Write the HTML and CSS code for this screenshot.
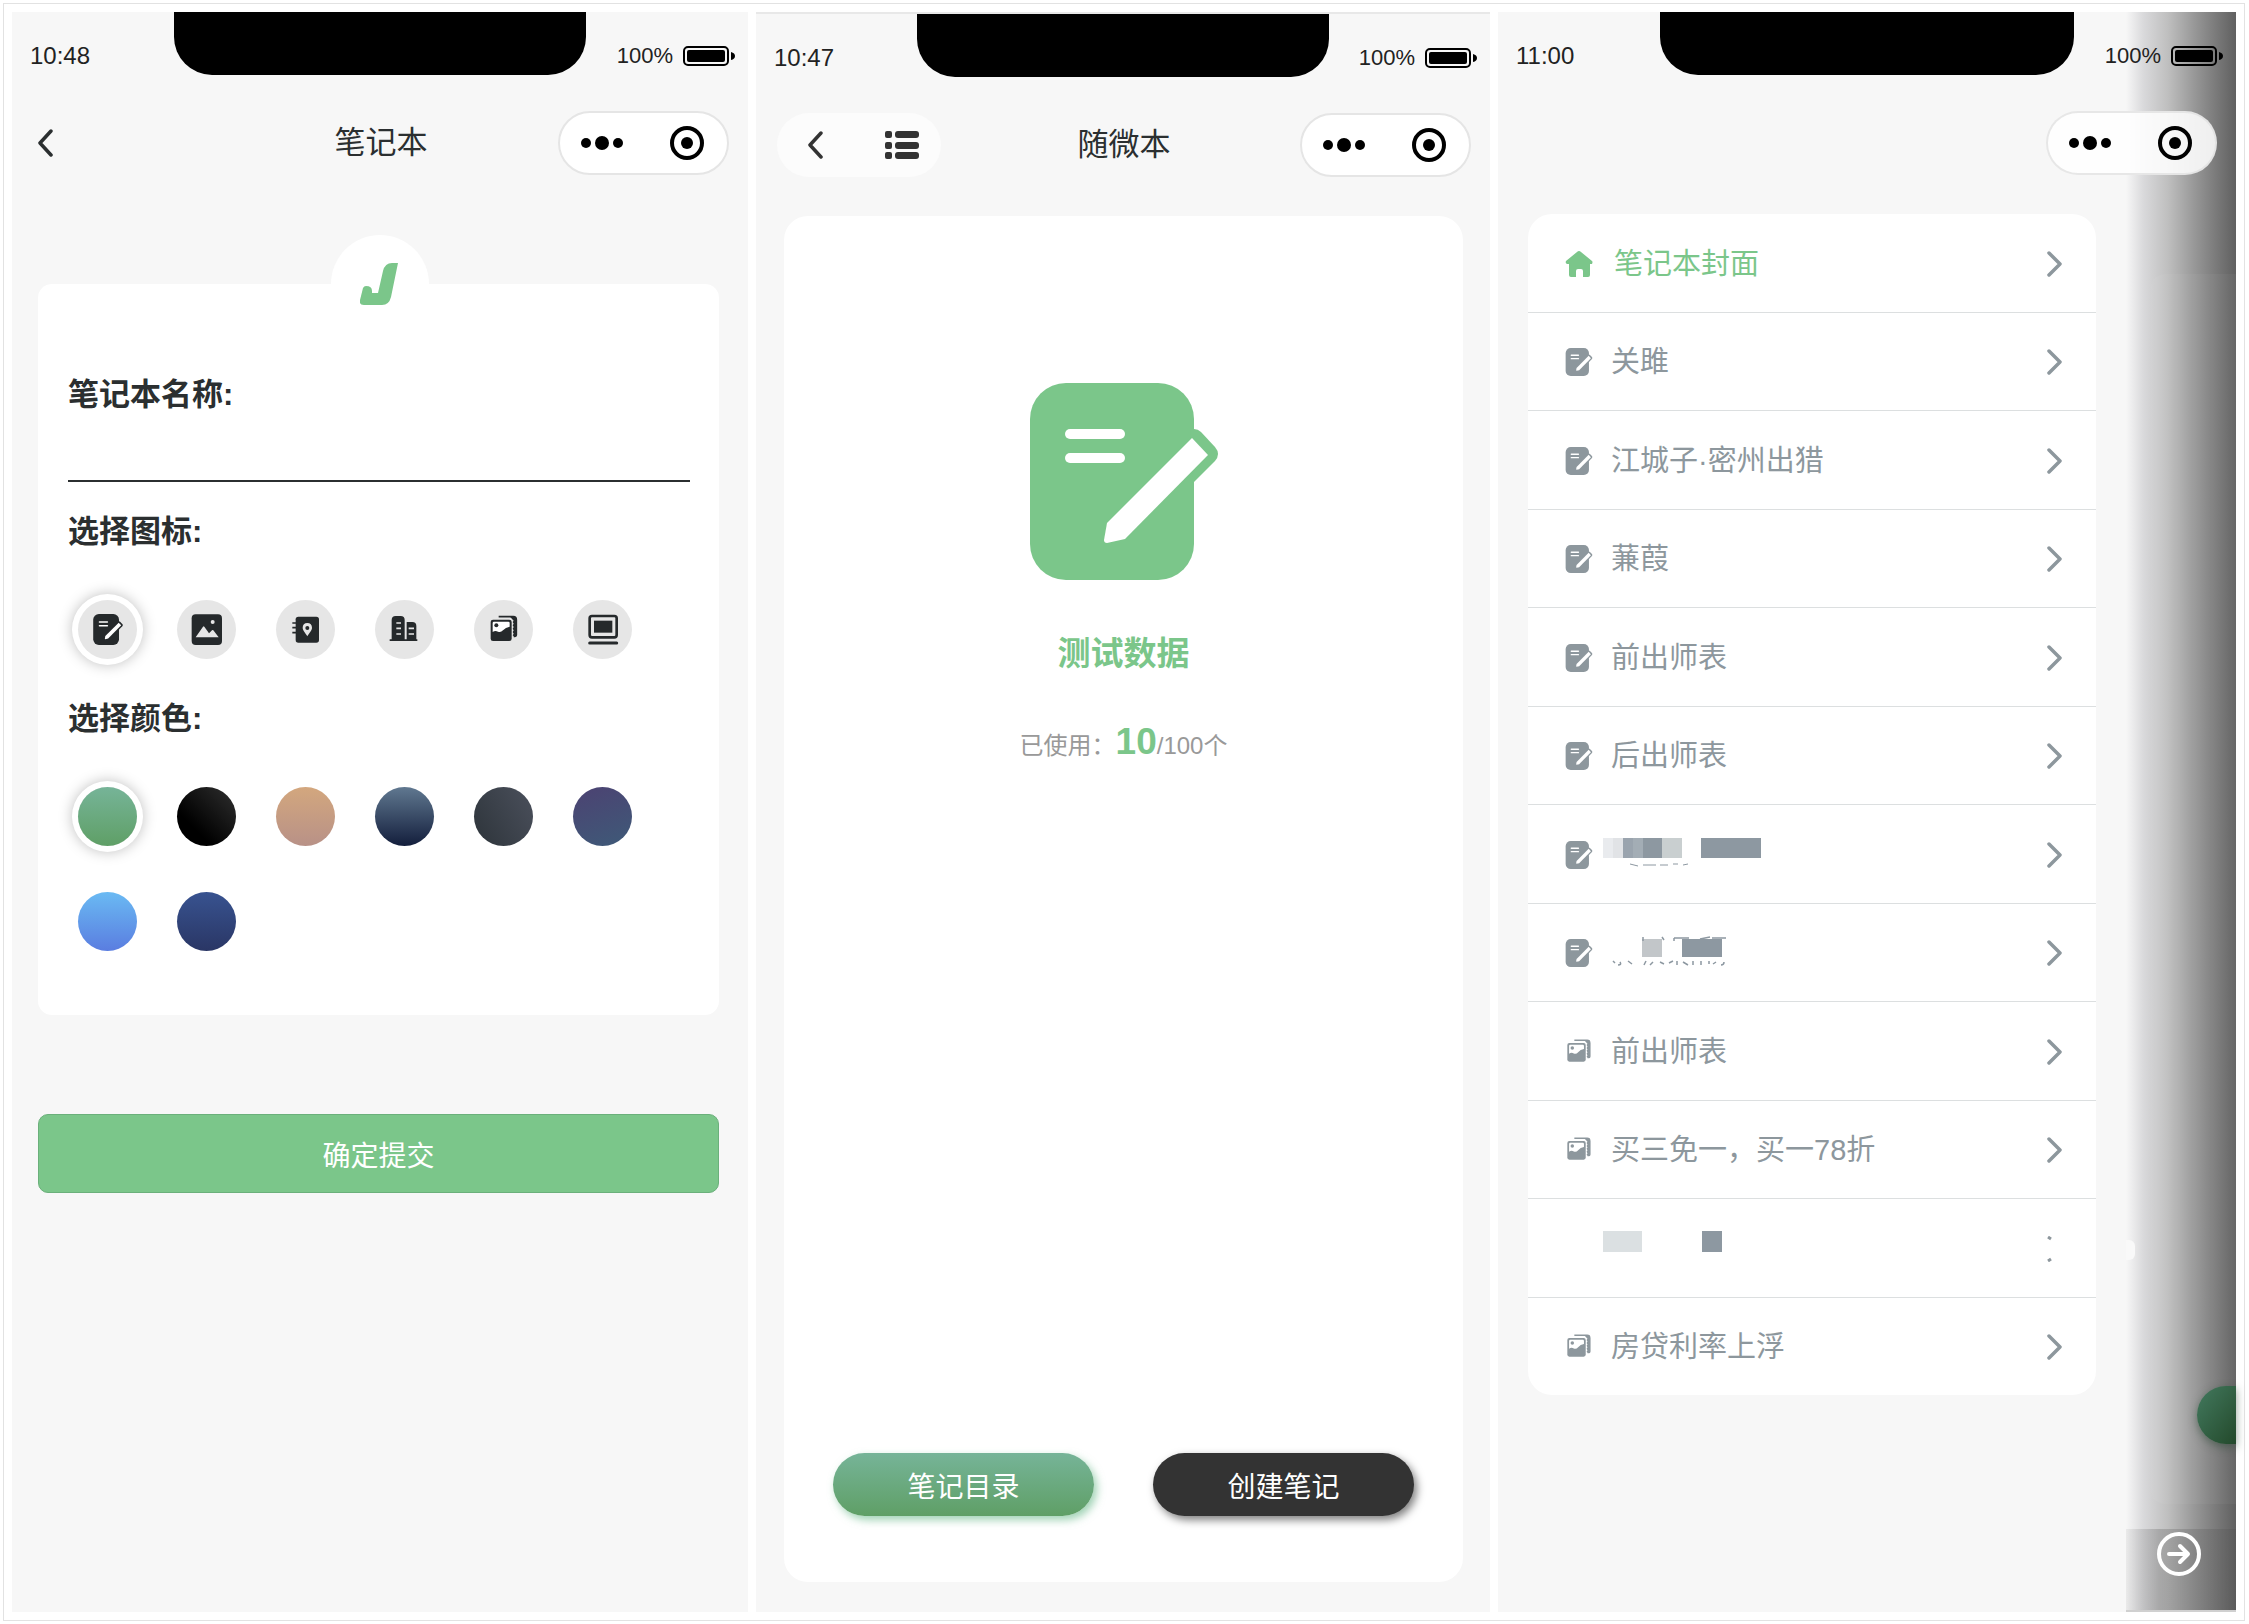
FILE: index.html
```html
<!DOCTYPE html>
<html lang="zh-CN">
<head>
    <meta charset="UTF-8">
    <meta name="viewport" content="width=device-width, initial-scale=1.0">
    <title>随微本</title>
    <link rel="stylesheet" href="styles.css">
</head>
<body>
    <!-- 公用图标 -->
    <svg class="sprite" aria-hidden="true">
        <symbol id="note" viewBox="0 0 188 197">
            <rect width="164" height="197" rx="36" fill="currentColor"/>
            <path d="M160 46h4q4 0 7 3l14 15q6 7 0 14l-22 22z" fill="currentColor"/>
            <rect class="hole" x="35" y="46" width="60" height="10" rx="5"/>
            <rect class="hole" x="35" y="70" width="60" height="10" rx="5"/>
            <path class="hole" d="M162 55l16 17-83 84-18 4q-3 0-3-3l3-17z"/>
        </symbol>
        <symbol id="gallery" viewBox="0 0 96 96">
            <path d="M32 8h44q9 0 9 9v46q0 4-4 4h-4" fill="none" stroke="currentColor" stroke-width="5"/>
            <path d="M66 8h12q8 0 8 8v48q0 3-6 3-4 0-6-3l3-5-3-5 3-5-3-5 3-5-3-5 3-5-3-5 3-4z" fill="currentColor"/>
            <rect x="8" y="17" width="63" height="64" rx="7" fill="currentColor"/>
            <path class="hole" d="M14 27q0-4 4-4h43q4 0 4 4v11q-12 2-20 11-7 8-15 4-8-5-16 1z"/>
            <circle cx="25" cy="34" r="6" fill="currentColor"/>
        </symbol>
        <symbol id="arrow-right" viewBox="0 0 16 26">
            <path d="M2 2l11 11L2 24" fill="none" stroke="currentColor" stroke-width="3.5" stroke-linecap="round" stroke-linejoin="round"/>
        </symbol>
        <symbol id="arrow-left" viewBox="0 0 16 28">
            <path d="M14 2L3 14l11 12" fill="none" stroke="currentColor" stroke-width="3.5" stroke-linecap="round" stroke-linejoin="round"/>
        </symbol>
        <symbol id="battery" viewBox="0 0 52 20">
            <rect x="1" y="1" width="44" height="18" rx="4" fill="none" stroke="#000" stroke-width="2"/>
            <rect x="4" y="4" width="38" height="12" rx="2" fill="#000"/>
            <path d="M48 6q4 1 4 4t-4 4z" fill="#000"/>
        </symbol>
        <symbol id="dots" viewBox="0 0 42 34">
            <circle cx="5" cy="17" r="5"/>
            <circle cx="21" cy="17" r="7"/>
            <circle cx="37" cy="17" r="5"/>
        </symbol>
        <symbol id="target" viewBox="0 0 34 34">
            <circle cx="17" cy="17" r="15" fill="none" stroke="#000" stroke-width="4"/>
            <circle cx="17" cy="17" r="6"/>
        </symbol>
    </svg>

    <main class="board">
        <!-- 新建笔记本 -->
        <section class="phone">
            <div class="status">
                <span class="time">10:48</span>
                <span class="notch"></span>
                <span class="power">100% <svg class="battery"><use href="#battery"/></svg></span>
            </div>
            <header class="nav">
                <button class="back" aria-label="返回"><svg><use href="#arrow-left"/></svg></button>
                <h1>笔记本</h1>
                <div class="capsule">
                    <button aria-label="更多"><svg class="dots"><use href="#dots"/></svg></button>
                    <button aria-label="关闭"><svg class="target"><use href="#target"/></svg></button>
                </div>
            </header>
            <form class="form">
                <div class="card form-card">
                    <div class="logo">
                        <svg viewBox="0 0 39 43">
                            <path d="M32 0h6l-7 34q-2 8-9 8H4q-5 0-4-5l3-12q1-2 3-2 6 0 6 5v2h6l5-22q2-8 9-8z" fill="currentColor"/>
                        </svg>
                    </div>
                    <label class="label" for="name">笔记本名称:</label>
                    <input class="name" id="name" type="text">

                    <h2 class="label">选择图标:</h2>
                    <div class="choices">
                        <label class="choice">
                            <input type="radio" name="icon" aria-label="笔记" checked>
                            <svg class="small"><use href="#note"/></svg>
                        </label>
                        <label class="choice">
                            <input type="radio" name="icon" aria-label="图片">
                            <svg viewBox="0 0 96 96">
                                <rect x="2" y="1" width="91" height="92" rx="12" fill="currentColor"/>
                                <path class="hole" d="M14 70l22-32q2-3 4 0l14 20 9-9q2-2 4 0l16 21z"/>
                                <circle class="hole" cx="65" cy="24" r="6"/>
                            </svg>
                        </label>
                        <label class="choice">
                            <input type="radio" name="icon" aria-label="通讯录">
                            <svg viewBox="0 0 96 96">
                                <rect x="17" y="8" width="70" height="78" rx="8" fill="currentColor"/>
                                <path d="M7 27h14M7 41h14M7 56h14" stroke="currentColor" stroke-width="5"/>
                                <path class="hole" fill-rule="evenodd" d="M52 27c-9 0-14 6-14 14 0 9 8 15 14 26 6-11 14-17 14-26 0-8-5-14-14-14zm0 9a6 6 0 1 1 0 12 6 6 0 0 1 0-12z"/>
                            </svg>
                        </label>
                        <label class="choice">
                            <input type="radio" name="icon" aria-label="公司">
                            <svg viewBox="0 0 96 96">
                                <path d="M8 76V18Q8 6 20 6h15q12 0 12 12v58h6V24h17q12 0 12 12v40h3v5H2v-5z" fill="currentColor"/>
                                <path class="holeline" d="M22 27h14M22 43h14M22 60h14M59 43h16M59 60h16"/>
                            </svg>
                        </label>
                        <label class="choice">
                            <input type="radio" name="icon" aria-label="相册">
                            <svg><use href="#gallery"/></svg>
                        </label>
                        <label class="choice">
                            <input type="radio" name="icon" aria-label="显示器">
                            <svg viewBox="0 0 96 96">
                                <rect x="8" y="6" width="81" height="64" rx="7" fill="none" stroke="currentColor" stroke-width="8"/>
                                <rect x="21" y="20" width="55" height="36" fill="currentColor"/>
                                <path d="M8 87h81" stroke="currentColor" stroke-width="9" stroke-linecap="round"/>
                            </svg>
                        </label>
                    </div>

                    <h2 class="label">选择颜色:</h2>
                    <div class="choices">
                        <label class="choice"><input class="green" type="radio" name="color" aria-label="绿色" checked></label>
                        <label class="choice"><input class="black" type="radio" name="color" aria-label="黑色"></label>
                        <label class="choice"><input class="tan" type="radio" name="color" aria-label="棕色"></label>
                        <label class="choice"><input class="navy" type="radio" name="color" aria-label="藏青"></label>
                        <label class="choice"><input class="slate" type="radio" name="color" aria-label="灰色"></label>
                        <label class="choice"><input class="purple" type="radio" name="color" aria-label="紫色"></label>
                        <label class="choice"><input class="sky" type="radio" name="color" aria-label="天蓝"></label>
                        <label class="choice"><input class="blue" type="radio" name="color" aria-label="深蓝"></label>
                    </div>
                </div>
                <button class="submit" type="button">确定提交</button>
            </form>
        </section>

        <!-- 笔记本封面 -->
        <section class="phone phone-cover">
            <div class="status">
                <span class="time">10:47</span>
                <span class="notch"></span>
                <span class="power">100% <svg class="battery"><use href="#battery"/></svg></span>
            </div>
            <header class="nav">
                <div class="pill">
                    <button aria-label="返回"><svg class="pill-back"><use href="#arrow-left"/></svg></button>
                    <button aria-label="目录">
                        <svg class="pill-list" viewBox="0 0 34 28">
                            <rect width="7" height="7" rx="2"/><rect x="10" width="24" height="7" rx="3"/>
                            <rect y="11" width="7" height="7" rx="2"/><rect x="10" y="11" width="24" height="7" rx="3"/>
                            <rect y="21" width="7" height="7" rx="2"/><rect x="10" y="21" width="24" height="7" rx="3"/>
                        </svg>
                    </button>
                </div>
                <h1>随微本</h1>
                <div class="capsule">
                    <button aria-label="更多"><svg class="dots"><use href="#dots"/></svg></button>
                    <button aria-label="关闭"><svg class="target"><use href="#target"/></svg></button>
                </div>
            </header>
            <div class="card cover">
                <svg class="cover-icon"><use href="#note"/></svg>
                <h2>测试数据</h2>
                <p>已使用：<b>10</b>/100个</p>
                <div class="actions">
                    <button class="green">笔记目录</button>
                    <button class="dark">创建笔记</button>
                </div>
            </div>
        </section>

        <!-- 笔记目录 -->
        <section class="phone phone-list">
            <div class="shade">
                <div class="shade-page"><span class="shade-button"></span></div>
                <div class="shade-bar">
                    <button aria-label="收起">
                        <svg viewBox="0 0 44 44" fill="none" stroke="#fff" stroke-width="4" stroke-linecap="round" stroke-linejoin="round">
                            <circle cx="22" cy="22" r="20"/>
                            <path d="M12 22h19M23 14l8 8-8 8"/>
                        </svg>
                    </button>
                </div>
                <span class="smudge"></span>
            </div>
            <div class="status">
                <span class="time">11:00</span>
                <span class="notch"></span>
                <span class="power">100% <svg class="battery"><use href="#battery"/></svg></span>
            </div>
            <header class="nav">
                <div class="capsule">
                    <button aria-label="更多"><svg class="dots"><use href="#dots"/></svg></button>
                    <button aria-label="关闭"><svg class="target"><use href="#target"/></svg></button>
                </div>
            </header>
            <ul class="card list">
                <li><a class="active" href="#">
                    <svg class="type" viewBox="0 0 28 28"><path d="M14 1q1 0 2 1l11 9q1 1 0 3h-2v11q0 2-2 2h-5v-6q0-2-2-2h-3q-2 0-2 2v6H6q-2 0-2-2V14H2q-2-1-1-3l11-9q1-1 2-1z" fill="currentColor"/></svg>
                    <span>笔记本封面</span><svg class="more"><use href="#arrow-right"/></svg></a></li>
                <li><a href="#"><svg class="type"><use href="#note"/></svg><span>关雎</span><svg class="more"><use href="#arrow-right"/></svg></a></li>
                <li><a href="#"><svg class="type"><use href="#note"/></svg><span>江城子·密州出猎</span><svg class="more"><use href="#arrow-right"/></svg></a></li>
                <li><a href="#"><svg class="type"><use href="#note"/></svg><span>蒹葭</span><svg class="more"><use href="#arrow-right"/></svg></a></li>
                <li><a href="#"><svg class="type"><use href="#note"/></svg><span>前出师表</span><svg class="more"><use href="#arrow-right"/></svg></a></li>
                <li><a href="#"><svg class="type"><use href="#note"/></svg><span>后出师表</span><svg class="more"><use href="#arrow-right"/></svg></a></li>
                <li><a href="#" aria-label="笔记"><svg class="type"><use href="#note"/></svg>
                    <svg class="mosaic" viewBox="0 0 170 48">
                        <rect y="7" width="10" height="20" fill="#e9ebee"/><rect x="10" y="7" width="10" height="20" fill="#e1e3e6"/>
                        <rect x="20" y="7" width="10" height="20" fill="#9aa4ae"/><rect x="30" y="7" width="10" height="20" fill="#a3adb5"/>
                        <rect x="40" y="7" width="19" height="20" fill="#8d98a1"/><rect x="59" y="7" width="20" height="20" fill="#c9cfd0"/>
                        <rect x="98" y="7" width="60" height="20" fill="#8d98a1"/>
                        <path d="M27 33l8 2M40 34h13M57 34h8M70 33h5M80 34l5-1" stroke="#8d98a1" stroke-width="1"/>
                    </svg><svg class="more"><use href="#arrow-right"/></svg></a></li>
                <li><a href="#" aria-label="笔记"><svg class="type"><use href="#note"/></svg>
                    <svg class="mosaic" viewBox="0 0 170 48">
                        <rect x="39" y="10" width="20" height="18" fill="#c2c6c9"/><rect x="79" y="10" width="40" height="18" fill="#8d98a1"/>
                        <path d="M40 8v4M59 8l2 3M71 9h15M71 9v3M97 10l10-2M109 9h14M10 32l2 2M17 33q2 3-2 3M25 32l4 3M43 32l-2 4M50 33l-3 3M57 33l4 2M66 34l4-2M74 32v4M80 33l5 3M90 32v4M98 32v4M106 32v3M113 33l-3 2M121 33q0 3-3 3" fill="none" stroke="#8d98a1" stroke-width="1.5"/>
                    </svg><svg class="more"><use href="#arrow-right"/></svg></a></li>
                <li><a href="#"><svg class="type"><use href="#gallery"/></svg><span>前出师表</span><svg class="more"><use href="#arrow-right"/></svg></a></li>
                <li><a href="#"><svg class="type"><use href="#gallery"/></svg><span>买三免一，买一78折</span><svg class="more"><use href="#arrow-right"/></svg></a></li>
                <li><a href="#" aria-label="笔记"><svg class="type"></svg>
                    <svg class="mosaic" viewBox="0 0 170 48">
                        <rect y="6" width="39" height="21" fill="#dbe0e2"/><rect x="99" y="6" width="20" height="21" fill="#8d98a1"/>
                    </svg>
                    <svg class="more" viewBox="0 0 16 26"><path d="M1 1l3 2M1 25l3-2" stroke="currentColor" stroke-width="3"/></svg></a></li>
                <li><a href="#"><svg class="type"><use href="#gallery"/></svg><span>房贷利率上浮</span><svg class="more"><use href="#arrow-right"/></svg></a></li>
            </ul>
        </section>
    </main>
</body>
</html>
```
FILE: styles.css
```css
* {
    box-sizing: border-box;
}
body {
    display: flex;
    min-height: 100vh;
    margin: 0;
    padding: 3px 4px 3px 3px;
    background-color: #fff;
    color: #2b2f30;
    font-family: "Liberation Sans", "Noto Sans CJK SC", sans-serif;
}
h1, h2, p, ul {
    margin: 0;
    padding: 0;
}
button {
    padding: 0;
    border: 0;
    background: none;
    color: inherit;
    font-family: inherit;
    cursor: pointer;
}
svg {
    display: block;
}
.sprite {
    position: absolute;
    width: 0;
    height: 0;
}
.hole {
    fill: #fff;
}
.board {
    flex: 1;
    display: grid;
    grid-template-columns: 736fr 734fr 738fr;
    gap: 8px;
    padding: 8px;
    border: 1px solid #e2e2e2;
}
.phone {
    position: relative;
    display: flex;
    flex-direction: column;
    min-width: 0;
    background-color: #f7f7f7;
}
.phone-cover {
    border-top: 2px solid #e8e8e8;
}

/* 状态栏 */
.status {
    position: relative;
    display: grid;
    grid-template-columns: 1fr 56% 1fr;
    align-items: center;
    height: 87px;
    color: #222;
}
.time {
    padding-left: 18px;
    font-size: 24px;
}
.notch {
    align-self: start;
    height: 63px;
    border-radius: 0 0 38px 38px;
    background-color: #000;
}
.power {
    display: flex;
    align-items: center;
    justify-content: flex-end;
    gap: 10px;
    padding-right: 13px;
    font-size: 22px;
}
.battery {
    width: 52px;
    height: 20px;
}

/* 导航栏 */
.nav {
    position: relative;
    display: grid;
    grid-template-columns: 1fr auto 1fr;
    align-items: center;
    height: 64px;
    margin: 12px 19px 0 21px;
}
.nav h1 {
    grid-column: 2;
    font-size: 31px;
    font-weight: 400;
    line-height: 40px;
}
.back {
    justify-self: start;
    padding: 0 4px;
}
.back svg {
    width: 16px;
    height: 28px;
}
.capsule {
    grid-column: 3;
    justify-self: end;
    display: flex;
    align-items: center;
    justify-content: space-between;
    width: 171px;
    height: 64px;
    padding: 0 23px 0 21px;
    border: 2px solid #e5e5e5;
    border-radius: 32px;
    background-color: #fff;
}
.dots {
    width: 42px;
    height: 34px;
}
.target {
    width: 34px;
    height: 34px;
}
.pill {
    display: flex;
    align-items: center;
    justify-content: space-between;
    width: 164px;
    height: 64px;
    padding: 0 22px 0 30px;
    border-radius: 32px;
    background-color: #fcfcfc;
    color: #333;
}
.pill-back {
    width: 16px;
    height: 28px;
}
.pill-list {
    width: 34px;
    height: 28px;
    fill: currentColor;
}
.card {
    background-color: #fff;
}

/* 表单 */
.form {
    margin: 109px 29px 0 26px;
}
.form-card {
    position: relative;
    padding: 91px 29px 64px 30px;
    border-radius: 14px;
}
.logo {
    position: absolute;
    top: -49px;
    left: 50%;
    display: flex;
    align-items: center;
    justify-content: center;
    width: 98px;
    height: 98px;
    margin-left: -48px;
    border-radius: 50%;
    background-color: #fff;
    color: #7bc68a;
}
.logo svg {
    width: 39px;
    height: 43px;
}
.label {
    display: block;
    font-size: 31px;
    font-weight: 700;
    line-height: 40px;
}
.name {
    display: block;
    width: 100%;
    height: 67px;
    margin-bottom: 30px;
    padding: 0;
    border: 0;
    border-bottom: 2px solid #2b2f30;
    border-radius: 0;
    outline: none;
    background: none;
    font-size: 28px;
}
.choices {
    display: grid;
    grid-template-columns: repeat(6, 59px);
    gap: 46px 40px;
    margin-top: 48px;
    padding-left: 10px;
}
.choices + .label {
    margin-top: 40px;
}
.choice {
    display: grid;
    place-items: center;
    height: 59px;
    cursor: pointer;
}
.choice input,
.choice svg {
    grid-area: 1 / 1;
}
.choice input {
    appearance: none;
    width: 59px;
    height: 59px;
    margin: 0;
    border-radius: 50%;
    background: #e6e6e6;
}
.choice input:checked {
    box-shadow: 0 0 0 6px #fff, 0 0 14px 6px rgba(0, 0, 0, 0.25);
}
.choice svg {
    z-index: 1;
    width: 32px;
    height: 32px;
    color: #25292b;
}
.choice .small {
    width: 30px;
    height: 31px;
}
.choice .hole {
    fill: #e6e6e6;
}
.holeline {
    stroke: #e6e6e6;
    stroke-width: 5;
}
.choice .green,
.actions .green {
    background: linear-gradient(#76b498, #5f9f66);
}
.choice .black {
    background: linear-gradient(45deg, #000 30%, #303030);
}
.choice .tan {
    background: linear-gradient(#d3a77e, #b89187);
}
.choice .navy {
    background: linear-gradient(#607890, #131e3c);
}
.choice .slate {
    background: linear-gradient(60deg, #2d343a, #4b505c);
}
.choice .purple {
    background: linear-gradient(160deg, #4c4272, #3e5a78);
}
.choice .sky {
    background: linear-gradient(#6abaf3, #5a7de0);
}
.choice .blue {
    background: linear-gradient(#385390, #2a3665);
}
.submit {
    width: 100%;
    height: 79px;
    margin-top: 99px;
    border: 1px solid #6bb07b;
    border-radius: 10px;
    background-color: #7bc68a;
    color: #fff;
    font-size: 28px;
}

/* 封面 */
.cover {
    flex: 1;
    display: flex;
    flex-direction: column;
    align-items: center;
    margin: 39px 27px 30px 28px;
    padding: 167px 49px 66px;
    border-radius: 24px;
    color: #7bc68a;
}
.cover-icon {
    width: 188px;
    height: 197px;
}
.cover h2 {
    margin-top: 54px;
    font-size: 33px;
    line-height: 40px;
}
.cover p {
    margin-top: 44px;
    color: #999;
    font-size: 24px;
    line-height: 48px;
}
.cover b {
    color: #7bc68a;
    font-size: 37px;
}
.actions {
    display: grid;
    grid-template-columns: 1fr 1fr;
    gap: 59px;
    width: 100%;
    margin-top: auto;
}
.actions button {
    height: 63px;
    border-radius: 32px;
    color: #fff;
    font-size: 28px;
}
.actions .green {
    box-shadow: 3px 4px 8px rgba(95, 180, 130, 0.6);
}
.actions .dark {
    background-color: #333;
    box-shadow: 3px 4px 8px rgba(0, 0, 0, 0.5);
}

/* 目录 */
.phone-list .capsule {
    background-color: rgba(255, 255, 255, 0.88);
    border-color: rgba(225, 225, 225, 0.8);
}
.list {
    flex: 1;
    display: flex;
    flex-direction: column;
    margin: 39px 140px 217px 30px;
    border-radius: 24px;
    list-style: none;
}
.list li {
    flex: 1;
    display: flex;
    border-bottom: 1px solid #dcdfe0;
}
.list li:last-child {
    border-bottom: 0;
}
.list a {
    flex: 1;
    display: flex;
    align-items: center;
    gap: 10px;
    padding: 2px 33px 0 37px;
    color: #8d979d;
    font-size: 29px;
    line-height: 40px;
    text-decoration: none;
}
.list .active {
    gap: 13px;
    color: #7bc68a;
}
.list span {
    padding-left: 8px;
}
.type {
    width: 28px;
    height: 28px;
}
.mosaic {
    width: 170px;
    height: 48px;
}
.more {
    width: 16px;
    height: 26px;
    margin-left: auto;
}
.active .more {
    color: #8d979d;
}

/* 右侧遮罩 */
.shade {
    position: absolute;
    top: 0;
    right: 0;
    bottom: 0;
    display: flex;
    flex-direction: column;
    justify-content: space-between;
    width: 110px;
    border-bottom: 2px solid #d0d0d0;
    background: linear-gradient(90deg, #f7f7f7, #d9d9db 16%, #bfbfbf 38%, #989898 62%, #777 84%, #606060);
}
.shade-page {
    display: flex;
    flex-direction: column;
    align-items: flex-end;
    justify-content: flex-end;
    flex: 1;
    margin: 262px 0 25px 25px;
    padding-bottom: 60px;
    border-radius: 14px 0 0 14px;
    background-color: rgba(255, 255, 255, 0.04);
}
.shade-button {
    width: 39px;
    height: 58px;
    border-radius: 29px 0 0 29px;
    background: linear-gradient(125deg, #437a5f, #23492b);
    box-shadow: 0 3px 8px rgba(40, 70, 50, 0.5);
}
.shade-bar {
    display: flex;
    justify-content: center;
    height: 81px;
    padding: 3px 4px 0 0;
    background: linear-gradient(90deg, rgba(0, 0, 0, 0.05), rgba(0, 0, 0, 0.16) 30%, rgba(0, 0, 0, 0.06));
}
.shade-bar button {
    align-self: flex-start;
}
.shade-bar svg {
    width: 44px;
    height: 44px;
}
.smudge {
    position: absolute;
    top: 1228px;
    left: 0;
    width: 9px;
    height: 20px;
    border-radius: 0 6px 6px 0;
    background-color: #f9f9f9;
}
```
